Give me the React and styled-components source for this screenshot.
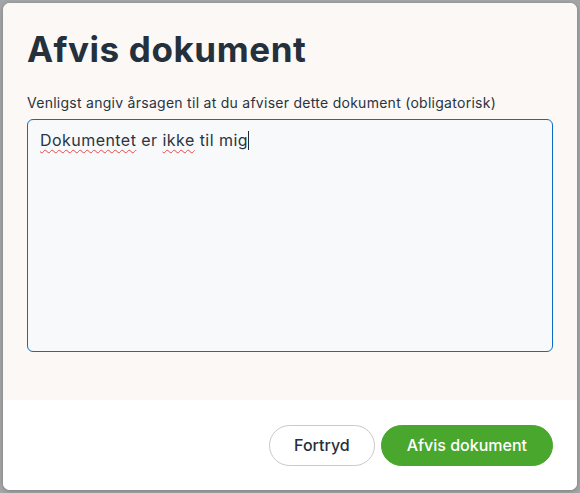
import React from "react";
import styled, { createGlobalStyle } from "styled-components";

const GlobalStyle = createGlobalStyle`
  html, body {
    margin: 0;
    padding: 0;
    background: #a4a5a6;
    font-family: Inter, "Open Sans", "Liberation Sans", sans-serif;
  }
  #root {
    padding: 3px;
  }
`;

const Dialog = styled.div`
  width: 574px;
  height: 487px;
  border-radius: 7px;
  overflow: hidden;
  background: #ffffff;
  display: flex;
  flex-direction: column;
  box-shadow: 0 1px 4px rgba(0, 0, 0, 0.25);
`;

const Body = styled.div`
  flex: 1;
  background: #fcf8f5;
  padding: 24px 24px 0 24px;
  display: flex;
  flex-direction: column;
`;

const Title = styled.h1`
  margin: 0;
  font-size: 35px;
  line-height: 44px;
  font-weight: 700;
  color: #24303c;
  letter-spacing: 0.6px;
`;

const Label = styled.label`
  margin-top: 23px;
  font-size: 14px;
  line-height: 18px;
  color: #2a343f;
  letter-spacing: 0.27px;
`;

const TextBox = styled.div`
  margin-top: 7px;
  height: 233px;
  box-sizing: border-box;
  border: 1px solid #0c6bc4;
  border-radius: 6px;
  background: #f7f9fb;
  padding: 9px 12px;
  font-size: 16px;
  line-height: 22px;
  color: #2a343f;
  letter-spacing: 0.45px;
`;

const Misspelled = styled.span`
  text-decoration: underline wavy #e24b4b;
  text-decoration-thickness: 1px;
  text-underline-offset: 3px;
`;

const Caret = styled.span`
  display: inline-block;
  width: 1px;
  height: 19px;
  background: #1f2a35;
  vertical-align: -4px;
`;

const Footer = styled.div`
  height: 90px;
  flex-shrink: 0;
  background: #ffffff;
  display: flex;
  align-items: center;
  justify-content: flex-end;
  gap: 6px;
  padding: 0 24px;
`;

const Button = styled.button`
  height: 41px;
  border-radius: 21px;
  font-family: inherit;
  font-size: 16px;
  font-weight: 500;
  padding: 0 ${(p) => (p.$primary ? "25px" : "24px")};
  border: 1px solid ${(p) => (p.$primary ? "#49a72d" : "#c9c9c9")};
  background: ${(p) => (p.$primary ? "#49a72d" : "#ffffff")};
  color: ${(p) => (p.$primary ? "#ffffff" : "#24303c")};
  cursor: pointer;
`;

export default function App() {
  return (
    <>
      <GlobalStyle />
      <Dialog>
        <Body>
          <Title>Afvis dokument</Title>
          <Label>
            Venligst angiv årsagen til at du afviser dette dokument (obligatorisk)
          </Label>
          <TextBox>
            <Misspelled>Dokumentet</Misspelled> er <Misspelled>ikke</Misspelled> til mig
            <Caret />
          </TextBox>
        </Body>
        <Footer>
          <Button>Fortryd</Button>
          <Button $primary>Afvis dokument</Button>
        </Footer>
      </Dialog>
    </>
  );
}
